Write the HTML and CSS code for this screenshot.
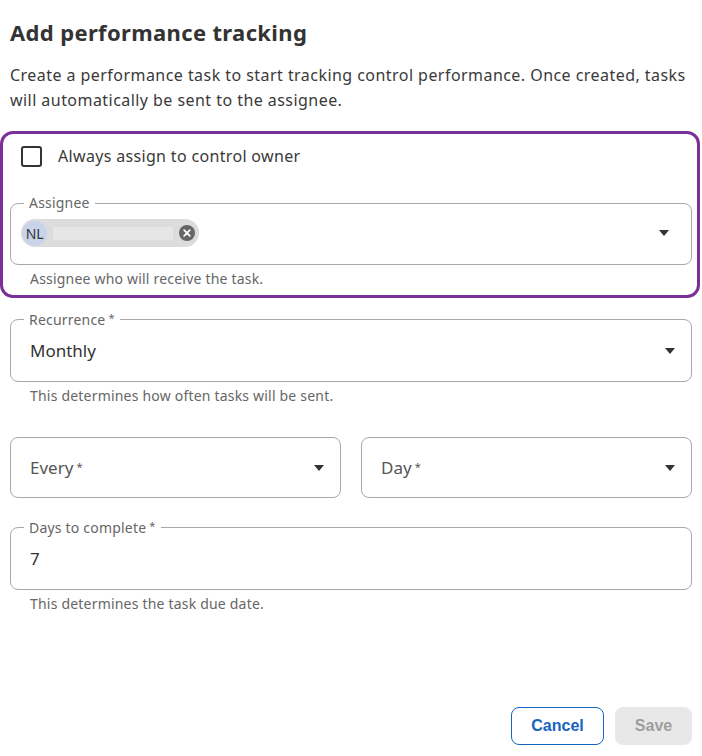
FILE: index.html
```html
<!DOCTYPE html>
<html lang="en">
<head>
<meta charset="utf-8">
<title>Add performance tracking</title>
<link rel="stylesheet" href="styles.css">
</head>
<body>
<main class="dialog">
  <h1 class="title">Add performance tracking</h1>
  <p class="desc">Create a performance task to start tracking control performance. Once created, tasks will automatically be sent to the assignee.</p>

  <section class="highlight">
    <label class="check-row">
      <span class="checkbox"></span>
      <span class="check-label">Always assign to control owner</span>
    </label>

    <fieldset class="field field-assignee">
      <legend>Assignee</legend>
      <div class="field-inner">
        <span class="chip">
          <span class="avatar">NL</span>
          <span class="chip-name"></span>
          <svg class="chip-x" width="16" height="16" viewBox="0 0 16 16" aria-hidden="true">
            <circle cx="8" cy="8" r="8" fill="#666"/>
            <path d="M5.2 5.2 L10.8 10.8 M10.8 5.2 L5.2 10.8" stroke="#fff" stroke-width="1.8" stroke-linecap="round"/>
          </svg>
        </span>
        <span class="caret caret-a"></span>
      </div>
    </fieldset>
    <p class="helper">Assignee who will receive the task.</p>
  </section>

  <fieldset class="field field-value field-rec">
    <legend>Recurrence<span class="req">*</span></legend>
    <div class="field-inner">
      <span class="value">Monthly</span>
      <span class="caret"></span>
    </div>
  </fieldset>
  <p class="helper">This determines how often tasks will be sent.</p>

  <div class="pair">
    <div class="select">
      <span class="placeholder">Every<span class="req">*</span></span>
      <span class="caret"></span>
    </div>
    <div class="select">
      <span class="placeholder">Day<span class="req">*</span></span>
      <span class="caret"></span>
    </div>
  </div>

  <fieldset class="field field-value field-days">
    <legend>Days to complete<span class="req">*</span></legend>
    <div class="field-inner">
      <span class="value">7</span>
    </div>
  </fieldset>
  <p class="helper">This determines the task due date.</p>

  <div class="actions">
    <button class="btn btn-cancel" type="button">Cancel</button>
    <button class="btn btn-save" type="button" disabled>Save</button>
  </div>
</main>
</body>
</html>
```

FILE: styles.css
```css
* { box-sizing: border-box; }

html, body {
  margin: 0;
  padding: 0;
  background: #fff;
}

body {
  font-family: "Noto Sans", "Open Sans", Arial, sans-serif;
  color: #3a3a3a;
}

.dialog {
  width: 702px;
  padding: 17px 10px 0 10px;
}

.title {
  margin: 0;
  font-size: 22px;
  line-height: 30px;
  font-weight: 700;
  color: #333;
  letter-spacing: 0.35px;
}

.desc {
  margin: 16px 0 0 0;
  font-size: 16px;
  line-height: 25px;
  color: #3a3a3a;
  letter-spacing: 0.45px;
}

.highlight {
  margin: 18px -8px 0 -10px;
  border: 3px solid #7b2f98;
  border-radius: 13px;
  padding: 10px 5px 8px 7px;
}

.check-row {
  display: flex;
  align-items: center;
  height: 24px;
  padding-left: 11px;
  gap: 16px;
}

.checkbox {
  width: 21px;
  height: 21px;
  border: 2px solid #333;
  border-radius: 3px;
  flex: none;
}

.check-label {
  font-size: 16px;
  color: #3a3a3a;
  letter-spacing: 0.33px;
}

.field {
  margin: 0;
  border: 1px solid #a9a9a9;
  border-radius: 8px;
  padding: 0 10px;
  min-width: 0;
}

.field legend {
  margin-left: 3px;
  padding: 0 5px;
  font-size: 14px;
  line-height: 16px;
  color: #666;
  letter-spacing: 0.2px;
}

.req {
  font-size: 11px;
  vertical-align: 3px;
  margin-left: 3px;
}

.field-assignee {
  margin-top: 27px;
}

.field-inner {
  display: flex;
  align-items: center;
  justify-content: space-between;
}

.field-assignee .field-inner {
  height: 53px;
  padding-bottom: 9px;
}

.chip {
  display: flex;
  align-items: center;
  height: 28px;
  width: 178px;
  background: #dcdcdc;
  border-radius: 14px;
  padding: 0 4px 0 1px;
}

.avatar {
  width: 25px;
  height: 25px;
  border-radius: 50%;
  background: #c9d3ea;
  font-size: 14px;
  line-height: 25px;
  text-align: center;
  color: #333;
  flex: none;
  letter-spacing: -0.3px;
}

.chip-name {
  width: 120px;
  height: 13px;
  background: #e6e6e6;
  margin-left: 6px;
  flex: none;
}

.chip-x {
  margin-left: auto;
  flex: none;
}

.caret {
  width: 0;
  height: 0;
  border-left: 5.5px solid transparent;
  border-right: 5.5px solid transparent;
  border-top: 6px solid #333;
  margin-right: 6px;
  flex: none;
}

.caret-a {
  margin-right: 12px;
}

.helper {
  margin: 6px 0 0 0;
  padding-left: 20px;
  font-size: 14px;
  line-height: 16px;
  color: #666;
  letter-spacing: 0.2px;
}

.field-value .field-inner {
  height: 53px;
  padding-bottom: 7px;
}

.field-rec {
  margin-top: 12px;
}

.value {
  padding-left: 9px;
  font-size: 17px;
  line-height: 24px;
  color: #333;
}

.pair {
  margin-top: 33px;
  display: grid;
  grid-template-columns: 1fr 1fr;
  gap: 20px;
}

.select {
  height: 61px;
  border: 1px solid #a9a9a9;
  border-radius: 8px;
  display: flex;
  align-items: center;
  justify-content: space-between;
  padding: 0 10px 0 19px;
}

.placeholder {
  font-size: 17px;
  color: #555;
}

.field-days {
  margin-top: 20px;
}

.actions {
  margin-top: 95px;
  display: flex;
  justify-content: flex-end;
  gap: 11px;
}

.btn {
  height: 38px;
  border-radius: 8px;
  font-family: "Liberation Sans", Arial, sans-serif;
  font-size: 16px;
  font-weight: 700;
  padding: 0;
}

.btn-cancel {
  width: 93px;
  background: #fff;
  border: 1px solid #1565c0;
  color: #1565c0;
}

.btn-save {
  width: 77px;
  background: #e8e8e8;
  border: none;
  color: #9e9e9e;
}
```
